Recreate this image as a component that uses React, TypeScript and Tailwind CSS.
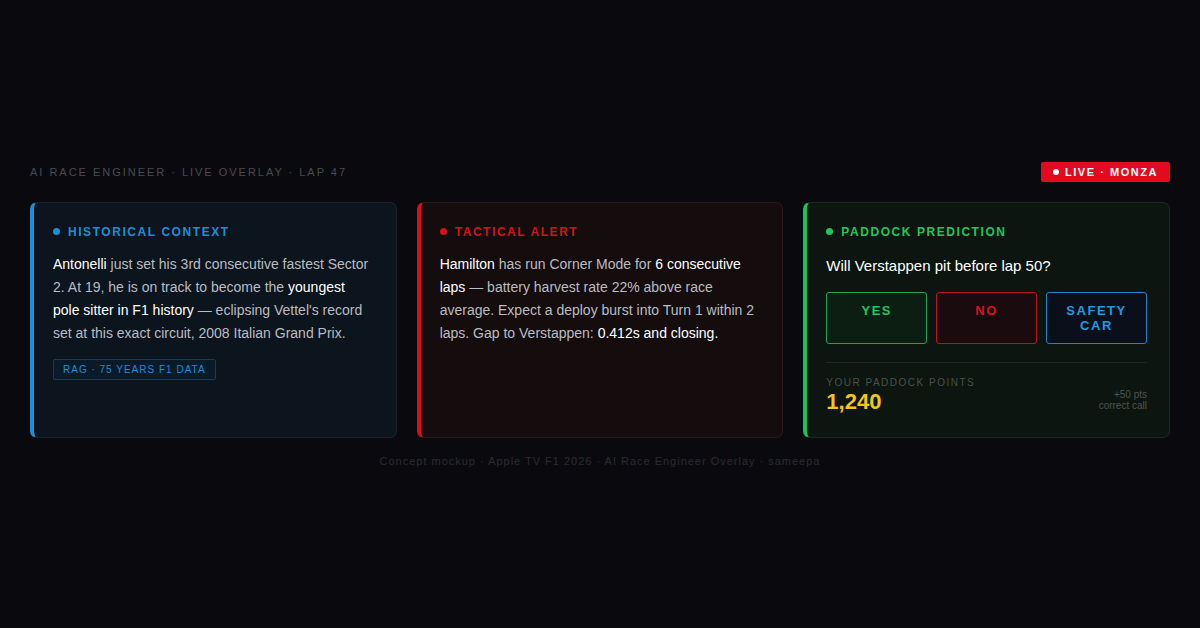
import React from "react";

const font = { fontFamily: '"Liberation Sans", Arial, sans-serif' };

function CardTitle({ color, dot, label }: { color: string; dot: string; label: string }) {
  return (
    <div className={`flex items-center gap-[8px] text-[12px] font-bold uppercase tracking-[0.13em] ${color}`}>
      <span className={`h-[7px] w-[7px] rounded-full ${dot}`} />
      {label}
    </div>
  );
}

const choice =
  "flex h-[52px] flex-col items-center justify-start rounded-[3px] border pt-[10px] text-[13px] font-bold uppercase leading-[15px] tracking-[0.12em]";

export default function App() {
  return (
    <div
      className="flex min-h-screen items-center justify-center bg-[#0a0a0e] px-[30px] pt-[3px]"
      style={font}
    >
      <div className="w-full">
        {/* ── Header ─────────────────────────────────────────────── */}
        <div className="flex items-center justify-between">
          <span className="text-[11px] uppercase tracking-[0.18em] text-[#4a4a52]">
            AI Race Engineer · Live Overlay · Lap 47
          </span>
          <span className="flex h-[20px] items-center gap-[6px] rounded-[2px] bg-[#e10a1e] px-[12px] text-[11px] font-bold uppercase tracking-[0.14em] text-white">
            <span className="h-[6px] w-[6px] rounded-full bg-white" />
            Live · Monza
          </span>
        </div>

        {/* ── Cards ──────────────────────────────────────────────── */}
        <div className="mt-[20px] grid grid-cols-3 gap-[20px]">
          <section className="h-[236px] rounded-[7px] border border-l-[4px] border-[#19242f] border-l-[#1c8fd6] bg-[#0c141d] pl-[19px] pr-[26px] pt-[20px]">
            <CardTitle color="text-[#1c8fd6]" dot="bg-[#1c8fd6]" label="Historical Context" />
            <p className="mt-[12px] text-[14px] leading-[23px] text-[#b9bcc2]">
              <span className="text-white">Antonelli</span> just set his 3rd consecutive fastest Sector 2. At 19,
              he is on track to become the <span className="text-white">youngest pole sitter in F1 history</span>{" "}
              — eclipsing Vettel's record set at this exact circuit, 2008 Italian Grand Prix.
            </p>
            <span className="mt-[14px] inline-block rounded-[2px] border border-[#1b3a55] bg-[#0b1a28] px-[9px] py-[2px] text-[10px] uppercase tracking-[0.1em] text-[#1c8fd6]">
              RAG · 75 Years F1 Data
            </span>
          </section>

          <section className="h-[236px] rounded-[7px] border border-l-[4px] border-[#2a1a1c] border-l-[#d9101d] bg-[#140c0d] pl-[19px] pr-[24px] pt-[20px]">
            <CardTitle color="text-[#d0141f]" dot="bg-[#d9101d]" label="Tactical Alert" />
            <p className="mt-[12px] text-[14px] leading-[23px] text-[#b9bcc2]">
              <span className="text-white">Hamilton</span> has run Corner Mode for{" "}
              <span className="text-white">6 consecutive laps</span> — battery harvest rate 22% above race
              average. Expect a deploy burst into Turn 1 within 2 laps. Gap to Verstappen:{" "}
              <span className="text-white">0.412s and closing.</span>
            </p>
          </section>

          <section className="h-[236px] rounded-[7px] border border-l-[4px] border-[#1a2a1e] border-l-[#1fbe5c] bg-[#0c150f] pl-[19px] pr-[22px] pt-[20px]">
            <CardTitle color="text-[#22c55e]" dot="bg-[#22c55e]" label="Paddock Prediction" />
            <p className="mt-[14px] text-[15px] leading-[22px] text-white">Will Verstappen pit before lap 50?</p>
            <div className="mt-[15px] grid grid-cols-3 gap-[9px]">
              <button className={`${choice} border-[#22a452] bg-[#0c1d12] text-[#22c55e]`}>Yes</button>
              <button className={`${choice} border-[#b3161f] bg-[#1a0c0e] text-[#d9101d]`}>No</button>
              <button className={`${choice} border-[#1f86c8] bg-[#0a0f1a] text-[#1c9be0]`}>
                <span>Safety</span>
                <span>Car</span>
              </button>
            </div>
            <div className="mt-[18px] flex items-end justify-between border-t border-[#1c2a20] pt-[14px]">
              <div>
                <div className="text-[10px] uppercase leading-[12px] tracking-[0.15em] text-[#4a524c]">
                  Your Paddock Points
                </div>
                <div className="text-[22px] font-bold leading-[26px] text-[#f5c518]">1,240</div>
              </div>
              <div className="pb-[4px] text-right text-[10px] leading-[11px] text-[#4d5550]">
                +50 pts
                <br />
                correct call
              </div>
            </div>
          </section>
        </div>

        {/* ── Footer ─────────────────────────────────────────────── */}
        <p className="mt-[15px] text-center text-[11px] tracking-[0.09em] text-[#2a2a31]">
          Concept mockup · Apple TV F1 2026 · AI Race Engineer Overlay · sameepa
        </p>
      </div>
    </div>
  );
}
